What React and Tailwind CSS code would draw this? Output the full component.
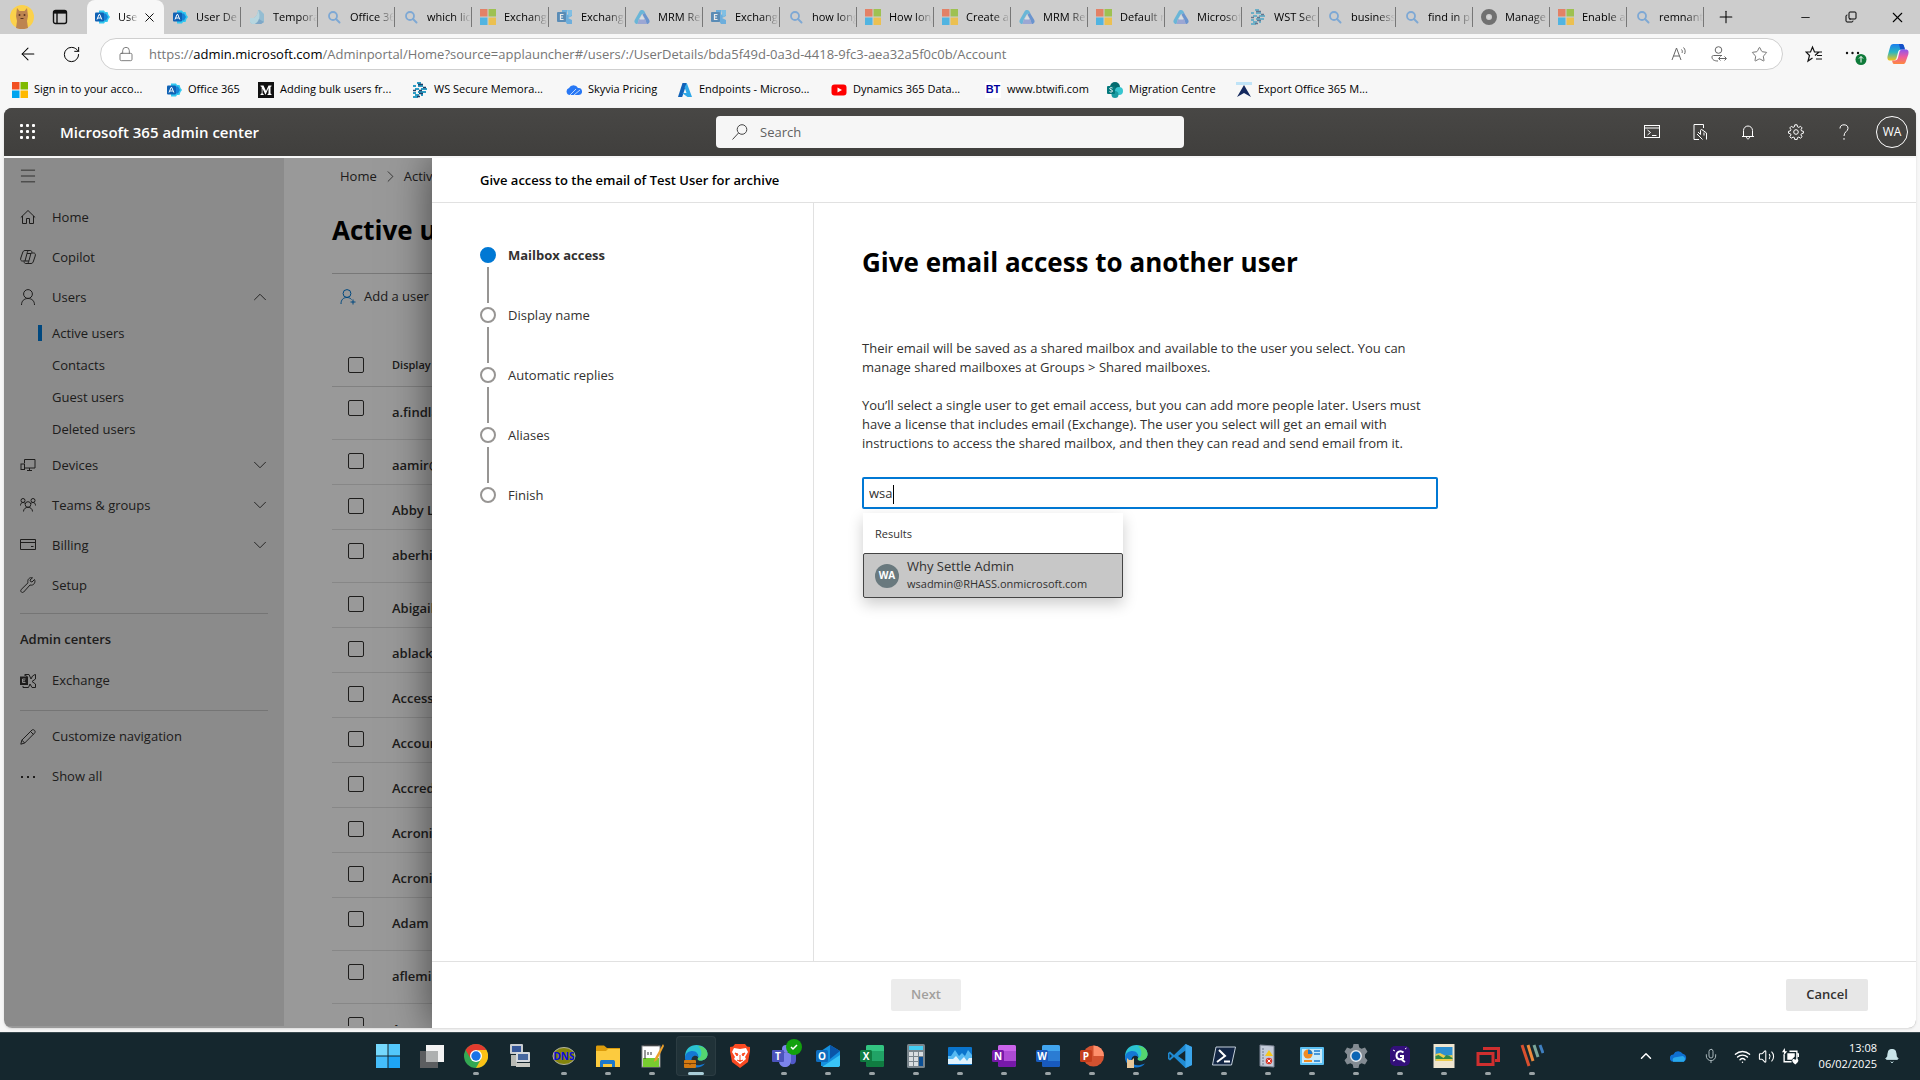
import {
  ArrowLeft,
  Bell,
  ChevronDown,
  ChevronRight,
  ChevronUp,
  Copy,
  Lock,
  Menu,
  Mic,
  Minus,
  Plus,
  RotateCw,
  Star,
  Volume2,
  Wifi,
  X,
} from 'lucide-react';

/* ---------- Favicons ---------- */

function Svg({ size = 16, box = 16, children, className = '' }) {
  return (
    <svg width={size} height={size} viewBox={`0 0 ${box} ${box}`} fill="none" className={`shrink-0 ${className}`} aria-hidden="true">
      {children}
    </svg>
  );
}

const favicons = {
  admin: (
    <Svg>
      <path d="M5 1.500h5l1 1.500h2.500l1 3L16 8l-1.500 2-1 3H11l-1 1.500H5z" fill="#32c8f0" />
      <path d="M9 4.500h3L14 8l-2 3.500H9z" fill="#1683d8" />
      <rect x="1" y="3.500" width="9" height="9" rx="1" fill="#0f62b5" />
      <path d="M3 10.500 5 5.500h.8l2 5M3.800 9h3" stroke="#fff" />
    </Svg>
  ),
  cube: (
    <Svg>
      <path d="M9 1h2l4 4v8l-3 2H3L1 13V9h3c2 0 5-3 5-8z" fill="#6fb4d6" />
      <path d="M9 1c0 5-3 8-5 8H1v4l2 2h3c4-2 6-8 3-14z" fill="#a9dcec" />
      <path d="M6 15c2-1 3.500-3 4-5l5 3-3 2z" fill="#4b8fc4" />
    </Svg>
  ),
  search: (
    <Svg>
      <circle cx="7" cy="7" r="4" stroke="#4a90d9" strokeWidth="1.800" />
      <path d="m10 10 3.500 3.500" stroke="#4a90d9" strokeWidth="2" strokeLinecap="round" />
    </Svg>
  ),
  ms: (
    <Svg>
      <path fill="#f25022" d="M0 0h7.500v7.500H0z" />
      <path fill="#7fba00" d="M8.500 0H16v7.500H8.500z" />
      <path fill="#00a4ef" d="M0 8.500h7.500V16H0z" />
      <path fill="#ffb900" d="M8.500 8.500H16V16H8.500z" />
    </Svg>
  ),
  exchange: (
    <Svg>
      <path d="M5 1h5v5l5-4v5l-4 2 4 2v4h-5l-2-3H5z" fill="#2f9be6" />
      <path d="M10 1h5v5l-3 2z" fill="#50b7f2" />
      <rect y="3" width="9" height="10" rx="1" fill="#0f62a8" />
      <path d="M6.500 5.500h-3v5h3M3.500 8h2.500" stroke="#fff" strokeWidth="1.200" />
    </Svg>
  ),
  tri: (
    <Svg>
      <path d="M8 1c2 0 2.500 1.500 3.500 3.500L8 5 5 10 3.500 15C1 15-.5 13 1 10.500L5.500 2.500C6.200 1.300 7 1 8 1z" fill="#2aa7df" />
      <path d="M11 4l4 6.500c1.500 2.500 0 4.500-2.500 4.500L11 10 8.500 5.500z" fill="#2a6fd0" />
      <path d="M5 10h6l2 5H3.500z" fill="#7a8ed8" />
      <path d="m8 6 2.500 4.500h-5z" fill="#dfe8f3" />
    </Svg>
  ),
  ws: (
    <Svg>
      <path d="M5 1h4M1 4h3M6 4h5M3 7h4M9 7h6M6 10h8M1 11h3M3 13h4M9 13h2M1 15h5" stroke="#2d9cc4" strokeWidth="1.800" />
      <path d="M6 2.500h5M11 5.500h3M1 8.500h3M7 8.500h3M7 11.500h4M5 14.500h3" stroke="#1f3f66" strokeWidth="1.500" />
    </Svg>
  ),
  gear: (
    <Svg>
      <circle cx="8" cy="8" r="5.500" stroke="#333" strokeWidth="5" />
      <circle cx="8" cy="8" r="1.500" fill="#ddd" />
    </Svg>
  ),
  medium: (
    <Svg>
      <rect width="16" height="16" fill="#111" />
      <path d="M2.500 3.500h3L8 9l2.500-5.500h3v.8l-1 .7v6.500l1 .7v.8H9.500v-.8l1-.7V6L7.700 12.500h-.4L4.500 6.500v4.800l1.200 1v.7H2.500v-.7l1.200-1V5l-1.200-.8z" fill="#fff" />
    </Svg>
  ),
  cloud: (
    <Svg>
      <path d="M4 13a3.600 3.600 0 0 1-1-7 5 5 0 0 1 9 0 3.500 3.500 0 0 1 1 7z" fill="#2878f5" />
      <path d="m4 13 6-6M8 13l6-5" stroke="#bcd6ff" />
    </Svg>
  ),
  azure: (
    <Svg>
      <path d="M5.500 1h4.300L5.200 15H1z" fill="#1062b8" />
      <path d="M9.800 1 15 15h-4.500L5 11h4.500L7.600 5.500z" fill="#2fa8e8" />
    </Svg>
  ),
  youtube: (
    <Svg>
      <rect x=".5" y="2.500" width="15" height="11" rx="3" fill="#f00" />
      <path d="m6.500 5.500 4.500 2.500-4.500 2.500z" fill="#fff" />
    </Svg>
  ),
  bt: (
    <span className="flex size-4 shrink-0 items-center justify-center bg-white font-['Liberation_Sans',sans-serif] text-[11px] font-bold text-[#00009c]">
      BT
    </span>
  ),
  sharepoint: (
    <Svg>
      <circle cx="8" cy="5" r="5" fill="#036c70" />
      <circle cx="12" cy="9" r="4" fill="#37c6d0" />
      <circle cx="8" cy="12.500" r="3.500" fill="#1a9ba1" />
      <rect y="4" width="8" height="8" rx="1" fill="#03787c" />
      <path d="M5.500 6c-1-.6-3-.4-2.800.8.200 1.200 2.800.8 2.800 2.200 0 1.200-2 1.300-3 .6" stroke="#fff" />
    </Svg>
  ),
  export: (
    <Svg>
      <path d="M0 0h16v3H0z" fill="#bfe3f7" />
      <path d="m8 3 7 12-7-4-7 4z" fill="#14295e" />
    </Svg>
  ),
};

const tabs = [
  ['User De', 'admin'],
  ['Temporary', 'cube'],
  ['Office 365', 'search'],
  ['which licen', 'search'],
  ['Exchange', 'ms'],
  ['Exchange', 'exchange'],
  ['MRM Rete', 'tri'],
  ['Exchange', 'exchange'],
  ['how long', 'search'],
  ['How long', 'ms'],
  ['Create an', 'ms'],
  ['MRM Rete', 'tri'],
  ['Default r', 'ms'],
  ['Microsoft', 'tri'],
  ['WST Secu', 'ws'],
  ['business', 'search'],
  ['find in pl', 'search'],
  ['Manage', 'gear'],
  ['Enable ar', 'ms'],
  ['remnant', 'search'],
];

const bookmarks = [
  ['Sign in to your acco...', 'ms', 'w-[154px]'],
  ['Office 365', 'admin', 'w-[92px]'],
  ['Adding bulk users fr...', 'medium', 'w-[154px]'],
  ['WS Secure Memora...', 'ws', 'w-[154px]'],
  ['Skyvia Pricing', 'cloud', 'w-[111px]'],
  ['Endpoints - Microso...', 'azure', 'w-[154px]'],
  ['Dynamics 365 Data...', 'youtube', 'w-[154px]'],
  ['www.btwifi.com', 'bt', 'w-[122px]'],
  ['Migration Centre', 'sharepoint', 'w-[129px]'],
  ['Export Office 365 M...', 'export', 'w-[154px]'],
];

/* ---------- Browser chrome ---------- */

function TabStrip() {
  return (
    <div className="flex h-[34px] shrink-0 items-center bg-[#cdcdcd] text-[11px] text-black">
      <div className="flex w-[87px] shrink-0 items-center gap-[18px] pl-[10px]">
        <Svg size={24} box={24}>
          <circle cx="12" cy="12" r="12" fill="#fbd14b" />
          <path d="M7 3l2.500 3h5L17 3l1 8-1 5 1 7c-3 1.500-9 1.500-12 0l1-7-1-5z" fill="#bd8450" />
          <circle cx="9.500" cy="10" r="1" fill="#5a3420" />
          <circle cx="14.500" cy="10" r="1" fill="#5a3420" />
          <path d="M10.500 13.500h3" stroke="#5a3420" />
        </Svg>
        <button type="button" aria-label="Tab actions menu">
          <Svg>
            <rect x="1.500" y="1.500" width="13" height="13" rx="2" stroke="#111" strokeWidth="1.400" />
            <path d="M1.500 3.500h13M5 4v10" stroke="#111" strokeWidth="1.400" />
            <path d="M2 2h12v2.500H2z" fill="#111" />
          </Svg>
        </button>
      </div>
      <div className="flex h-full w-[77px] shrink-0 items-center rounded-t-lg bg-[#f7f7f7] pl-[7px]">
        {favicons.admin}
        <span className="ml-2 w-5 overflow-hidden whitespace-nowrap [mask-image:linear-gradient(to_right,black_50%,transparent)]">User</span>
        <button type="button" aria-label="Close tab" className="ml-1">
          <X size={15} strokeWidth={1.5} />
        </button>
      </div>
      {tabs.map(([title, icon], i) => (
        <button
          type="button"
          key={i}
          className="flex h-5 w-[77px] shrink items-center gap-2 overflow-hidden border-r border-[#777] pl-2"
        >
          <span className={i > 0 ? 'opacity-60' : ''}>{favicons[icon]}</span>
          <span className="flex-1 overflow-hidden text-left whitespace-nowrap [mask-image:linear-gradient(to_right,black_60%,transparent)]">
            {title}
          </span>
        </button>
      ))}
      <button type="button" aria-label="New tab" className="ml-3">
        <Plus size={20} strokeWidth={1.25} />
      </button>
      <div className="ml-auto flex items-center">
        <button type="button" aria-label="Minimize" className="flex w-[46px] justify-center">
          <Minus size={13} strokeWidth={1.5} />
        </button>
        <button type="button" aria-label="Restore" className="flex w-[46px] justify-center">
          <Copy size={12} strokeWidth={2} className="-scale-x-100 rotate-180" />
        </button>
        <button type="button" aria-label="Close" className="flex w-[46px] justify-center">
          <X size={17} strokeWidth={1.5} />
        </button>
      </div>
    </div>
  );
}

function AddressBar() {
  return (
    <div className="flex h-10 shrink-0 items-center bg-[#f7f7f7] pl-[18px] text-black">
      <button type="button" aria-label="Back">
        <ArrowLeft size={20} strokeWidth={1.25} />
      </button>
      <button type="button" aria-label="Refresh" className="ml-6">
        <RotateCw size={19} strokeWidth={1.25} />
      </button>
      <div className="ml-[19px] flex h-8 flex-1 items-center rounded-full border border-[#cfcfcf] bg-white pr-[14px] pl-[17px] text-[#666]">
        <Lock size={16} strokeWidth={1.25} />
        <p className="ml-[15px] flex-1 pt-px text-[13px] whitespace-nowrap text-[#767676]">
          https://<span className="text-black">admin.microsoft.com</span>
          /Adminportal/Home?source=applauncher#/users/:/UserDetails/bda5f49d-0a3d-4418-9fc3-aea32a5f0c0b/Account
        </p>
        <div className="flex items-center gap-6">
          <button type="button" aria-label="Read aloud">
            <Svg>
              <path d="m1 14 4.500-12L10 14M2.500 10h6M10.500 3.500c1 1 1 2.500.5 3.500M12.500 1.500c2 2 2 4.500 1 6.500" stroke="#666" />
            </Svg>
          </button>
          <button type="button" aria-label="Profile sign in">
            <Svg>
              <circle cx="7.500" cy="4" r="3.300" stroke="#666" />
              <path d="M11 9.500H2.500c-1 0-1.500.6-1.500 1.500 0 2.500 2 4 6 4M8 12.500h7M9.500 10.500l-2 2 2 2M13.500 10.500l2 2-2 2" stroke="#666" />
            </Svg>
          </button>
          <button type="button" aria-label="Favorite">
            <Star size={17} strokeWidth={1.25} />
          </button>
        </div>
      </div>
      <div className="flex w-[137px] shrink-0 items-center justify-end gap-5 pr-[11px]">
        <button type="button" aria-label="Favorites">
          <Svg size={18} box={18}>
            <path d="M10 10.500 14 7H9.500L7.500 2 5.500 7H1l3.500 3.500L3 16l4.500-3M11.500 7H17M12 10.500h5M11 14h6" stroke="#111" strokeWidth="1.200" />
          </Svg>
        </button>
        <button type="button" aria-label="Settings and more">
          <Svg size={24} box={24}>
            <circle cx="4" cy="11" r="1.200" fill="#111" />
            <circle cx="9.500" cy="11" r="1.200" fill="#111" />
            <circle cx="15" cy="11" r="1.200" fill="#111" />
            <circle cx="18" cy="17.500" r="5.500" fill="#0f7b3a" />
            <path d="M18 20.500v-6M16 16.500l2-2 2 2" stroke="#fff" />
          </Svg>
        </button>
        <button type="button" aria-label="Copilot">
          <CopilotLogo />
        </button>
      </div>
    </div>
  );
}

function CopilotLogo() {
  return (
    <Svg size={22} box={24}>
      <defs>
        <linearGradient id="cpa" x1="0" y1="0" x2="0" y2="1">
          <stop offset="0" stopColor="#1b7ef0" />
          <stop offset=".5" stopColor="#29b6c0" />
          <stop offset="1" stopColor="#f5c518" />
        </linearGradient>
        <linearGradient id="cpb" x1="0" y1="0" x2="0" y2="1">
          <stop offset="0" stopColor="#8b55ee" />
          <stop offset=".5" stopColor="#ee5aa0" />
          <stop offset="1" stopColor="#ff8a3c" />
        </linearGradient>
      </defs>
      <path d="M7 1h9c2 0 2.500 1.500 3 4l.5 2h-4c-2 0-3 1-3.500 3l-1.500 6c-.5 2-1.500 3-3.500 3H3.500C.5 19 0 16.500.8 13.500l2.500-9C4 2.200 5 1 7 1z" fill="url(#cpa)" />
      <path d="M13 1h3c2 0 2.500 1.500 3 4l.5 2h-5z" fill="#1450c8" />
      <path d="M17 23H8.500c-2 0-2.500-1.500-3-4h3c2 0 3-1 3.500-3l1.500-6c.5-2 1.500-3 3.500-3h3.500c3 0 3.500 2.500 2.700 5.500l-2.500 7C20 21.800 19 23 17 23z" fill="url(#cpb)" />
    </Svg>
  );
}

function Bookmarks() {
  return (
    <nav aria-label="Favorites bar" className="flex h-[34px] shrink-0 items-center bg-[#f7f7f7] pb-[3px] pl-3 text-[11px] text-black">
      {bookmarks.map(([label, icon, width]) => (
        <a key={label} href="#" className={`flex shrink-0 items-center gap-[6px] whitespace-nowrap ${width}`}>
          {favicons[icon]}
          {label}
        </a>
      ))}
    </nav>
  );
}

/* ---------- Admin center ---------- */

const headerIcons = {
  'Cloud Shell': (
    <>
      <rect x=".5" y="1.500" width="15" height="12" />
      <path d="M.5 4h15M3.500 6l3 2.500-3 2.500M8 11.500h4.500" />
    </>
  ),
  Mobile: (
    <>
      <path d="M7 15.500H2V.5h9.500V4" />
      <path d="m6 8 2.500 2.500V6.500c0-1.300 2-1.300 2 0M5 10l5.500 5.500M10.500 6l4 3v6.500M12 11.500V8.500" />
    </>
  ),
  Notifications: (
    <>
      <path d="M3.500 12.500V6.500a4.500 4.500 0 0 1 9 0v6M2 12.500h12M6.500 13c0 2.500 3 2.500 3 0" />
    </>
  ),
  Settings: (
    <>
      <circle cx="8" cy="8" r="2.300" />
      <path d="m6.800.8-.4 2-1.300.6-1.800-1.100-1.500 1.600 1.100 1.700-.5 1.300-1.900.4v1.900l1.900.5.6 1.200-1.200 1.800 1.500 1.500 1.800-1.100 1.300.5.4 2h2.300l.4-2 1.300-.5 1.700 1.100 1.600-1.500-1.200-1.800.6-1.200 1.900-.5V7.300l-1.900-.4-.5-1.300 1.100-1.700-1.600-1.600-1.700 1.100-1.300-.6-.4-2z" />
    </>
  ),
  Help: <path d="M4 4.500C4 2 5.500.8 8 .8s4 1.200 4 3.500C12 7.500 8 7.500 8 12M8 14v1.800" />,
};

function AppHeader() {
  return (
    <header className="flex h-12 shrink-0 items-center justify-between bg-[#474644] bg-linear-to-b from-[#484745] to-[#403f3d] text-white">
      <div className="flex flex-1 items-center gap-6 pl-4">
        <button type="button" aria-label="App launcher">
          <Svg className="fill-white">
            {[1, 7, 13].map((y) => [1, 7, 13].map((x) => <rect key={`${x}-${y}`} x={x - 1} y={y - 1} width="3" height="3" rx="1" />))}
          </Svg>
        </button>
        <span className="text-[15px] font-semibold">Microsoft 365 admin center</span>
      </div>
      <label className="flex h-8 w-[468px] items-center gap-3 rounded bg-[#f6f6f6] px-4 text-[#444]">
        <Svg>
          <circle cx="10" cy="5.500" r="4.800" stroke="#444" />
          <path d="M6.500 9 .5 15.500" stroke="#444" />
        </Svg>
        <input type="search" aria-label="Search" placeholder="Search" className="flex-1 bg-transparent pt-0.5 text-[13px] outline-none placeholder:text-[#616161]" />
      </label>
      <div className="flex flex-1 items-center justify-end pl-9">
        {Object.entries(headerIcons).map(([label, icon]) => (
          <button type="button" key={label} aria-label={label} className="flex w-12 justify-center">
            <Svg className="stroke-white">{icon}</Svg>
          </button>
        ))}
        <button type="button" aria-label="Account manager" className="mx-2 flex size-8 items-center justify-center rounded-full border border-white text-[12px]">
          WA
        </button>
      </div>
    </header>
  );
}

const navIcons = {
  home: <path d="M.8 8.500 8 1.500l7.200 7M2.500 7v7.500h4v-5h3v5h4V7" />,
  copilot: (
    <path d="M5 1.500h5.500c1 0 1.200.8 1.500 2M5 1.500c-1.500 0-2 1-2.500 2.500L.8 9c-.6 2 .2 3 1.500 3H5l2-7.500c.4-1.800.8-3 2-3M11 14.500H5.500c-1 0-1.200-.8-1.500-2M11 14.500c1.500 0 2-1 2.500-2.500l1.700-5c.6-2-.2-3-1.500-3H11L9 11.500c-.4 1.800-.8 3-2 3M7 4.500h4M5 12h4" />
  ),
  users: (
    <>
      <circle cx="8" cy="5" r="4.400" />
      <path d="M1.500 16c0-4 2.500-6.500 6.500-6.500s6.500 2.500 6.500 6.500" />
    </>
  ),
  devices: (
    <>
      <path d="M4.500 6V2.500h10.500v8.500H5M7 13.500h5M9.500 11v2.500" />
      <rect x="1" y="7" width="3.500" height="5.500" />
    </>
  ),
  teams: (
    <>
      <circle cx="8" cy="7.500" r="2.800" />
      <circle cx="3" cy="3.500" r="2" />
      <circle cx="13" cy="3.500" r="2" />
      <path d="M3.500 14.500c0-2.500 2-4.200 4.500-4.200s4.500 1.700 4.500 4.200M.5 8.500c0-2 1-3 2.500-3s2 .7 2.500 1.500M15.500 8.500c0-2-1-3-2.500-3s-2 .7-2.500 1.500" />
    </>
  ),
  billing: <path d="M.5 2.500h15v10H.5zM.5 5.500h15M11 9.500h2.500" />,
  setup: <path d="M14.500 2.500 12 5l-1.500-.5L10 3l2.500-2.200C9.500 0 7 2.500 8 5.800L1.200 12.500c-1.500 1.800 1 4 2.500 2.500L10 8c3.500 1 6-2.500 4.500-5.500z" />,
  exchange: (
    <>
      <path d="M5 3V1.500h4L11 6l1.500-3 2.500-1.500h.5V6L12 8.500l3.500 2.500v3.500H12L10 11l-1.500 3.500H3V13M5 1.500 8 5" />
      <rect x=".5" y="4" width="7" height="7.500" fill="#323130" />
      <path d="M5.500 6h-3v3.500h3M2.500 7.800h2.500" stroke="#e8e8e8" />
    </>
  ),
  edit: <path d="m.8 15.200 1-4L12 1c1.500-1.200 4 1 2.800 2.800L4.700 14zM10.500 2.500l3 3M1.800 11.200l3 2.800" />,
  more: <path d="M1 8h2M7 8h2M13 8h2" strokeWidth="2" />,
};

function NavItem({ icon, label, expand }) {
  return (
    <li>
      <button type="button" className="flex h-10 w-full items-center pr-[13px] pl-4 text-left">
        <Svg className="stroke-[#323130]">{navIcons[icon]}</Svg>
        <span className="ml-4 flex-1 pt-px">{label}</span>
        {expand === 'up' && <ChevronUp size={22} strokeWidth={1} />}
        {expand === 'down' && <ChevronDown size={22} strokeWidth={1} />}
      </button>
    </li>
  );
}

function Sidebar() {
  return (
    <nav aria-label="Admin center" className="w-[280px] shrink-0 bg-[#e8e8e8] text-[13px] text-[#323130]">
      <button type="button" aria-label="Collapse navigation" className="flex h-[39px] items-center pb-[3px] pl-[14px]">
        <Menu size={20} strokeWidth={1} />
      </button>
      <ul>
        <NavItem icon="home" label="Home" />
        <NavItem icon="copilot" label="Copilot" />
        <NavItem icon="users" label="Users" expand="up" />
        <li>
          <ul>
            {['Active users', 'Contacts', 'Guest users', 'Deleted users'].map((label, i) => (
              <li key={label} className="flex h-8 items-center pl-[34px]">
                <span className={`h-4 w-1 ${i === 0 ? 'bg-[#0078d4]' : ''}`} />
                <a href="#" className="ml-[10px] pt-px">{label}</a>
              </li>
            ))}
          </ul>
        </li>
        <NavItem icon="devices" label="Devices" expand="down" />
        <NavItem icon="teams" label="Teams & groups" expand="down" />
        <NavItem icon="billing" label="Billing" expand="down" />
        <NavItem icon="setup" label="Setup" />
      </ul>
      <div className="mx-4 mt-2 border-t border-[#c4c4c4] pt-4 pb-[11px]">
        <h2 className="font-semibold">Admin centers</h2>
      </div>
      <ul>
        <NavItem icon="exchange" label="Exchange" />
      </ul>
      <ul className="mt-[9px]">
        <li className="mx-4 mb-[6px] border-t border-[#c4c4c4]" />
        <NavItem icon="edit" label="Customize navigation" />
        <NavItem icon="more" label="Show all" />
      </ul>
    </nav>
  );
}

const users = [
  ['a.findlay', true],
  ['aamir@', false],
  ['Abby Lane', false],
  ['aberhill', true],
  ['Abigail', false],
  ['ablack', false],
  ['Access', false],
  ['Accounts', false],
  ['Accreditation', false],
  ['Acronis', false],
  ['Acronis', false],
  ['Adam', true],
  ['afleming', true],
  ['Agnes', true],
];

function Check({ label }) {
  return (
    <input type="checkbox" aria-label={label} className="block size-4 appearance-none rounded-xs border border-[#323130]" />
  );
}

function UsersPage() {
  return (
    <main className="flex-1 overflow-hidden bg-white pl-12 text-[13px] text-[#323130]">
      <div className="flex h-[37px] items-center gap-1 pl-2">
        <a href="#">Home</a>
        <ChevronRight size={19} strokeWidth={1} />
        <span>Active users</span>
      </div>
      <h1 className="mt-[19px] text-[26px] leading-8 font-bold text-black">Active users</h1>
      <div className="mt-[27px] flex h-[46px] items-center gap-2 border-t border-[#c8c8c8] pl-2">
        <Svg className="stroke-[#0078d4]">
          <circle cx="7" cy="4.500" r="3.900" />
          <path d="M1 15c0-4 2-6.500 6-6.500 2 0 3.500.8 4.500 2M13 10.500v5M10.500 13h5" />
        </Svg>
        <button type="button">Add a user</button>
      </div>
      <table className="mt-[26px] w-full table-fixed border-collapse text-left font-semibold">
        <thead>
          <tr className="h-[41px] border-b border-[#d8d8d8] text-[11px]">
            <th className="w-[60px] pl-4"><Check label="Select all" /></th>
            <th className="font-semibold">Display name</th>
          </tr>
        </thead>
        <tbody>
          {users.map(([name, tall], i) => (
            <tr key={i} className={`border-b border-[#e1e1e1] align-top ${tall ? 'h-[53px]' : 'h-[45px]'}`}>
              <td className="pt-[13px] pl-4"><Check label={name} /></td>
              <td className="pt-4">{name}</td>
            </tr>
          ))}
        </tbody>
      </table>
    </main>
  );
}

const steps = ['Mailbox access', 'Display name', 'Automatic replies', 'Aliases', 'Finish'];

function AccessPanel() {
  return (
    <section
      role="dialog"
      aria-label="Give access to the email of Test User for archive"
      className="absolute inset-y-0 right-0 left-[428px] flex flex-col bg-white text-[13px] text-[#323130] shadow-[0_0_40px_rgba(0,0,0,0.55)]"
    >
      <div className="flex h-[45px] shrink-0 items-center border-b border-[#e1e1e1] px-12 pt-px font-semibold text-black">
        Give access to the email of Test User for archive
      </div>
      <div className="flex min-h-0 flex-1">
        <ol className="w-[382px] shrink-0 border-r border-[#e1e1e1] px-12 pt-11">
          {steps.map((step, i) => (
            <li key={step} className="flex gap-3">
              <div className="flex w-4 flex-col items-center gap-1">
                <span className={`size-4 rounded-full border-2 ${i === 0 ? 'border-[#0078d4] bg-[#0078d4]' : 'border-[#979593]'}`} />
                {i < steps.length - 1 && <span className="mb-1 h-9 w-[2px] bg-[#979593]" />}
              </div>
              <span className={`leading-4 ${i === 0 ? 'font-bold' : ''}`}>{step}</span>
            </li>
          ))}
        </ol>
        <div className="flex-1 px-12 pt-[43px]">
          <h2 className="text-[26px] leading-8 font-bold text-black">Give email access to another user</h2>
          <div className="mt-[61px] max-w-[576px] leading-[19px]">
            <p>
              Their email will be saved as a shared mailbox and available to the user you select. You can
              manage shared mailboxes at Groups &gt; Shared mailboxes.
            </p>
            <p className="mt-[19px]">
              You’ll select a single user to get email access, but you can add more people later. Users must
              have a license that includes email (Exchange). The user you select will get an email with
              instructions to access the shared mailbox, and then they can read and send email from it.
            </p>
          </div>
          <div className="relative mt-6 max-w-[576px]">
            <label className="flex h-8 items-center rounded-xs border-2 border-[#0078d4] px-[5px] pt-0.5">
              <input
                type="text"
                aria-label="Select a user"
                defaultValue="wsa"
                className="field-sizing-content caret-transparent outline-none"
              />
              <span className="h-[19px] w-px bg-black" />
            </label>
            <div className="absolute top-full left-px mt-1 w-[260px] bg-white shadow-[0_6px_14px_rgba(0,0,0,0.2)]">
              <p className="flex h-10 items-center px-3 pt-0.5 text-[11px]">Results</p>
              <button type="button" className="flex h-[45px] w-full items-center gap-2 rounded-xs border border-[#444] bg-[#c7c7c7] px-[11px] text-left">
                <span className="flex size-6 items-center justify-center rounded-full bg-[#69797e] text-[10px] font-bold text-white">WA</span>
                <span className="flex flex-col pb-0.5">
                  <span className="leading-[19px]">Why Settle Admin</span>
                  <span className="text-[11px] leading-4">wsadmin@RHASS.onmicrosoft.com</span>
                </span>
              </button>
            </div>
          </div>
        </div>
      </div>
      <div className="flex h-[67px] shrink-0 items-center justify-between border-t border-[#e1e1e1] pr-12 pb-px pl-[459px] font-semibold">
        <button type="button" disabled className="h-8 w-[70px] rounded-xs bg-[#ececec] text-[#a19f9d]">Next</button>
        <button type="button" className="h-8 w-[82px] rounded-xs bg-[#e7e7e7]">Cancel</button>
      </div>
    </section>
  );
}

/* ---------- Taskbar ---------- */

function OfficeIcon({ letter, dark, mid, light, round }) {
  return (
    <Svg size={24} box={24}>
      {round ? (
        <>
          <circle cx="13.500" cy="12" r="10.500" fill={mid} />
          <path d="M13.500 1.500A10.500 10.500 0 0 1 24 12H13.500z" fill={light} />
        </>
      ) : (
        <>
          <rect x="6" y="1" width="18" height="22" rx="2" fill={mid} />
          <path d="M8 1h14a2 2 0 0 1 2 2v4H6V3a2 2 0 0 1 2-2z" fill={light} />
          <path d="M6 17h18v4a2 2 0 0 1-2 2H8a2 2 0 0 1-2-2z" fill={dark} />
        </>
      )}
      <rect y="6" width="12" height="12" rx="1.500" fill={dark} />
      <text x="6" y="15.500" textAnchor="middle" fontSize="10" fontWeight="700" fill="#fff">{letter}</text>
    </Svg>
  );
}

const edgeShape = (
  <>
    <path d="M1 13C1 5 6 1 12.500 1 19 1 23.500 5 23.500 10c0 4-3 6.500-7 6.500-3 0-3-1.500-2.500-2.500 1-2-.5-5-4-5-4 0-7 3-7 8-1-1-2-2.500-2-4z" fill="#2bc3d2" />
    <path d="M14 2c6 0 9.500 4 9.500 8 0 4-3 6.500-7 6.500-3 0-3-1.500-2.500-2.500 4 0 5-8 0-12z" fill="#54d66f" />
    <path d="M1 13c.5-4 4-6 7.500-6 4 0 6 3 5.500 6-3-3-8 0-6 5 1.500 3.500 6 4.500 13 1.500-2 2.500-5 4-9 4C5.500 23.500 1 19 1 13z" fill="#1478d4" />
  </>
);

const apps = [
  { name: 'Start', icon: (
    <Svg size={24} box={24}>
      <path d="M0 0h11.500v11.500H0z" fill="#75d8fc" />
      <path d="M12.500 0H24v11.500H12.500z" fill="#53c7fb" />
      <path d="M0 12.500h11.500V24H0z" fill="#45bdfa" />
      <path d="M12.500 12.500H24V24H12.500z" fill="#1ea5f5" />
    </Svg>
  ) },
  { name: 'Task view', icon: (
    <Svg size={24} box={24}>
      <path d="M6 1h18v17H6z" fill="#f3f3f3" />
      <path d="M0 7h18v17H0z" fill="#5c5e60" />
      <path d="M6 7h12v11H6z" fill="#aeb0b0" />
    </Svg>
  ) },
  { name: 'Chrome', dot: true, icon: (
    <Svg size={24} box={24}>
      <circle cx="12" cy="12" r="12" fill="#34a853" />
      <path d="M1.600 6A12 12 0 0 1 22.400 6L12 7 7 15z" fill="#e33b2e" />
      <path d="M22.400 6A12 12 0 0 1 12 24l5-9-3-9z" fill="#fbc116" />
      <circle cx="12" cy="12" r="6" fill="#fff" />
      <circle cx="12" cy="12" r="4.700" fill="#1a73e8" />
    </Svg>
  ) },
  { name: 'Remote computers', icon: (
    <Svg size={24} box={24}>
      <rect x="2" y="0" width="13" height="10" rx="1" fill="#c8ccd0" />
      <rect x="4" y="2" width="9" height="6" fill="#36589a" />
      <path d="M3 11h6v8h3v3H3z" fill="#b8bab4" />
      <rect x="8" y="8" width="14" height="10" rx="1" fill="#d5d8dc" />
      <rect x="10" y="10" width="10" height="6" fill="#47689f" />
      <path d="M8 19h14v4H8z" fill="#c9c9c2" />
    </Svg>
  ) },
  { name: 'DNS', dot: true, icon: (
    <Svg size={24} box={24}>
      <ellipse cx="12" cy="12" rx="11" ry="8.500" fill="#84840c" stroke="#b5b5a0" />
      <text x="12" y="16" textAnchor="middle" fontSize="10" fontWeight="700" fill="#0a0ae0">DNS</text>
    </Svg>
  ) },
  { name: 'File Explorer', dot: true, icon: (
    <Svg size={24} box={24}>
      <path d="M0 3c0-1 .5-1.500 1.500-1.500H8L11 4h13v6H0z" fill="#dc9c0c" />
      <path d="M0 7h10l2-2h12v18H0z" fill="#fccb3f" />
      <path d="M4 23v-5c0-1.500 1-2 2-2h11c1 0 2 .5 2 2v5h-3v-3H7v3z" fill="#1c78cc" />
    </Svg>
  ) },
  { name: 'Notepad++', dot: true, icon: (
    <Svg size={24} box={24}>
      <rect x="2" y="2" width="18" height="21" fill="#fff" stroke="#8a8a8a" />
      <path d="M3 14h16v9H3z" fill="#78cc30" />
      <path d="M5 6v9M8 8v3M11 8v3M4 1h14" stroke="#333" />
      <path d="m23 0-8 14-1 4 3-2 7-14z" fill="#eda02a" />
    </Svg>
  ) },
  { name: 'Microsoft Edge work', active: true, icon: (
    <Svg size={24} box={24}>
      {edgeShape}
      <rect y="16" width="12" height="8" rx="1" fill="#d37a12" />
      <path d="M0 19.500h12M6 19v2" stroke="#7a4108" />
    </Svg>
  ) },
  { name: 'Brave', icon: (
    <Svg size={24} box={24}>
      <path d="m7 0h10l2 2.500 3 .5 0 4-2 11-8 6-8-6L2 7l0-4 3-.5z" fill="#fb4a22" />
      <path d="M6 4l6 1 6-1 2 4-3 5 1 2-6 5-6-5 1-2-3-5z" fill="#fff" />
      <path d="m7 9 3 1-1 2zM17 9l-3 1 1 2zM12 11v5M9 16l3 1.500 3-1.500" stroke="#fb4a22" fill="#fb4a22" />
    </Svg>
  ) },
  { name: 'Teams', dot: true, badge: true, icon: (
    <Svg size={24} box={24}>
      <circle cx="14" cy="5" r="4" fill="#7b83eb" />
      <circle cx="21" cy="7" r="2.500" fill="#5059c9" />
      <path d="M7 9h12v8c0 8-12 8-12 0z" fill="#7b83eb" />
      <path d="M19 10h5v6c0 4-3 5-5 4z" fill="#5059c9" />
      <rect y="6" width="12" height="12" rx="1" fill="#4b53bc" />
      <text x="6" y="15.500" textAnchor="middle" fontSize="10" fontWeight="700" fill="#fff">T</text>
    </Svg>
  ) },
  { name: 'Outlook', dot: true, icon: (
    <Svg size={24} box={24}>
      <path d="M5 7 14 1l10 6v15H5z" fill="#1490df" />
      <path d="m14 1 10 6-10 8z" fill="#0a55a8" />
      <path d="m6 23 18-12v10c0 1.500-1 2-2 2z" fill="#39c3f5" />
      <rect y="6" width="12" height="12" rx="1.500" fill="#0f6cbd" />
      <text x="6" y="15.500" textAnchor="middle" fontSize="10" fontWeight="700" fill="#fff">O</text>
    </Svg>
  ) },
  { name: 'Excel', dot: true, icon: <OfficeIcon letter="X" dark="#107c41" mid="#21a366" light="#33c481" /> },
  { name: 'Calculator', dot: true, icon: (
    <Svg size={24} box={24}>
      <rect x="3" y="0" width="18" height="24" rx="1.500" fill="#79858c" />
      <rect x="5" y="2" width="14" height="4" fill="#44cdf2" />
      <path d="M5 8h4v4H5zM10 8h4v4h-4zM15 8h4v4h-4zM5 13h4v4H5zM10 13h4v4h-4zM5 18h4v4H5zM10 18h4v4h-4z" fill="#d9dee1" />
      <path d="M15 13h4v9h-4z" fill="#0c4f94" />
    </Svg>
  ) },
  { name: 'Performance', dot: true, icon: (
    <Svg size={24} box={24}>
      <rect y="3" width="24" height="18" rx="1" fill="#0a74cc" />
      <path d="M0 12h3l4-6 4 6 3-3 3 3 3-6 4 5v9H0z" fill="#56b9f2" />
      <path d="M0 15h5l3-3 4 5 4-4 3 4 2-3h3v6H0z" fill="#e0f2fd" />
    </Svg>
  ) },
  { name: 'OneNote', dot: true, icon: <OfficeIcon letter="N" dark="#7719aa" mid="#ae4bd5" light="#ca64ea" /> },
  { name: 'Word', dot: true, icon: <OfficeIcon letter="W" dark="#185abd" mid="#2b7cd3" light="#41a5ee" /> },
  { name: 'PowerPoint', dot: true, icon: <OfficeIcon letter="P" dark="#c43e1c" mid="#d35230" light="#ff8f6b" round /> },
  { name: 'Microsoft Edge', dot: true, icon: (
    <Svg size={24} box={24}>
      {edgeShape}
      <path d="m3 14 2 2h3l2-2v10H3z" fill="#e8c79a" />
    </Svg>
  ) },
  { name: 'VS Code', dot: true, icon: (
    <Svg size={24} box={24}>
      <path d="M17.500 0 24 3v18l-6.500 3L6 13l-4 3.500L0 15v-6l2-1.500L6 11z" fill="#1f8ad2" />
      <path d="M17.500 6.500v11L10 12zM1.500 9.500v5L4 12z" fill="#15272e" />
      <path d="m17.500 0 6.500 3v18l-6.500 3z" fill="#3ba6ec" />
    </Svg>
  ) },
  { name: 'PowerShell', dot: true, icon: (
    <Svg size={24} box={24}>
      <path d="M4 3h19.500l-4 18H.5z" fill="#122644" stroke="#c4d0dc" />
      <path d="m7 6 6 6-8 6M12 17.500h6" stroke="#fff" strokeWidth="2" />
    </Svg>
  ) },
  { name: 'Event viewer', dot: true, icon: (
    <Svg size={24} box={24}>
      <path d="m4 1 14 1v21L4 22z" fill="#c3cbd9" stroke="#7d8594" />
      <path d="M7 4v17" stroke="#6c7688" strokeDasharray="2 1" />
      <path d="m13 6 4 6H9z" fill="#f5c71a" />
      <circle cx="13" cy="17" r="3.300" fill="#dc3a2c" />
      <path d="m11.500 15.500 3 3M14.500 15.500l-3 3" stroke="#fff" />
    </Svg>
  ) },
  { name: 'Control panel', dot: true, icon: (
    <Svg size={24} box={24}>
      <rect y="3" width="24" height="18" rx="1" fill="#5cc0f3" />
      <rect x="2" y="5" width="20" height="14" fill="#c9ebfb" />
      <circle cx="8" cy="10" r="4.500" fill="#f08c24" />
      <path d="M8 10V5.500a4.500 4.500 0 0 1 4.500 4.500z" fill="#1c7bcd" />
      <path d="M14 7h6M14 10h6M14 17h6" stroke="#1c7bcd" strokeWidth="1.500" />
      <path d="M4 17h8" stroke="#f08c24" strokeWidth="2" />
    </Svg>
  ) },
  { name: 'Settings', dot: true, icon: (
    <Svg size={24} box={24}>
      <path d="m9.500 0h5l.8 3.500 2.200 1.200L21 3.500l2.500 4.300L21 10.500v3l2.500 2.700L21 20.500l-3.500-1.200-2.200 1.200-.8 3.500h-5l-.8-3.500-2.200-1.200L3 20.500.5 16.200 3 13.500v-3L.5 7.800 3 3.500l3.500 1.200 2.200-1.200z" fill="#838b92" />
      <circle cx="12" cy="12" r="5.200" fill="#0d66b5" stroke="#e6eaee" strokeWidth="1.500" />
    </Svg>
  ) },
  { name: 'Gather', dot: true, icon: (
    <Svg size={24} box={24}>
      <rect x="2" y="2" width="20" height="20" rx="5" fill="#33107a" />
      <path d="M15.500 8.500c-3-2.500-7-1-7 3s3.500 4.500 6.500 3V12H12M14 16l3 2" stroke="#fff" strokeWidth="2" />
      <path d="M5 6l2 1M17 5l1.500-1M5 17l2-1" stroke="#fff" />
    </Svg>
  ) },
  { name: 'Photo viewer', dot: true, icon: (
    <Svg size={24} box={24}>
      <rect x="1.500" y="0" width="21" height="24" fill="#efe6d0" />
      <rect x="3.500" y="3" width="17" height="14" fill="#2d8fd0" />
      <path d="M3.500 10 8 9l6 3 6.500-1v6h-17z" fill="#eccc4c" />
      <path d="m3.500 12 3-1 5 3 3-3 3 1 3 2v1h-17z" fill="#2f8a4a" />
    </Svg>
  ) },
  { name: 'Remote windows', dot: true, icon: (
    <Svg size={24} box={24}>
      <path d="M7 4.500h15.500v12H19" stroke="#cf2f2f" strokeWidth="3" />
      <rect x="2" y="9.500" width="15" height="11" stroke="#cf2f2f" strokeWidth="3" />
    </Svg>
  ) },
  { name: 'Stripes', dot: true, icon: (
    <Svg size={24} box={24}>
      <path d="m2 1 7 21" stroke="#d8502f" strokeWidth="3" />
      <path d="m8 1 5 16" stroke="#ee8a3c" strokeWidth="3" />
      <path d="m14 1 4 12" stroke="#7aa69a" strokeWidth="3" />
      <path d="m20 1 3 8" stroke="#3f7fc0" strokeWidth="3" />
    </Svg>
  ) },
];

function Taskbar() {
  return (
    <footer className="flex h-12 shrink-0 items-center bg-[#15272e] text-white shadow-[inset_0_1px_0_#3a4a50]">
      <div className="flex-1 pl-5" />
      <div className="flex">
        {apps.map((app) => (
          <button
            type="button"
            key={app.name}
            aria-label={app.name}
            className="relative flex h-12 w-11 flex-col items-center justify-center"
          >
            {app.active && <span className="absolute inset-x-[2px] inset-y-1 rounded border border-white/5 bg-white/5" />}
            <span className="relative">{app.icon}</span>
            {app.badge && (
              <span className="absolute top-[7px] right-1 flex size-4 items-center justify-center rounded-full bg-[#13a10e]">
                <Svg size={10} box={10}><path d="m2 5 2 2 4-4" stroke="#fff" strokeWidth="1.500" /></Svg>
              </span>
            )}
            {app.dot && <span className="absolute bottom-[5px] h-[3px] w-[6px] rounded-full bg-[#9aa3a6]" />}
            {app.active && <span className="absolute bottom-[5px] h-[3px] w-4 rounded-full bg-[#a9cdd8]" />}
          </button>
        ))}
      </div>
      <div className="flex flex-1 items-center justify-end pr-5">
        <ChevronUp size={18} strokeWidth={2} />
        <Svg size={17} className="ml-[15px]">
          <path d="M3.500 13a3.500 3.500 0 0 1-.3-7A5 5 0 0 1 12 5.500 4 4 0 0 1 13 13z" fill="#0f6fd0" />
          <path d="M3 13a3 3 0 0 1 1-4l8-1.500a3.200 3.200 0 0 1 1 5.500z" fill="#28a8ea" />
        </Svg>
        <Mic size={16} strokeWidth={1.5} className="ml-4 text-[#a8b6ba]" />
        <Wifi size={17} strokeWidth={2} className="ml-[15px]" />
        <Volume2 size={17} strokeWidth={1.5} className="ml-[7px]" />
        <Svg size={17} className="ml-[7px]">
          <path d="M7 3h7v9M2 6v7h7M14.500 5.500h1v3" stroke="#fff" strokeWidth="1.300" />
          <path d="M5 5h7v3l-3 3H5zM2.500 0 0 4h2l-.5 3L5 3H3z" fill="#fff" />
          <path d="M12.500 15.500c-5-3-2.500-6.500 0-4.500 2.500-2 5 1.500 0 4.500z" fill="#fff" />
        </Svg>
        <div className="ml-5 text-right text-[11px] leading-4">
          <div>13:08</div>
          <div>06/02/2025</div>
        </div>
        <Bell size={16} strokeWidth={1.5} className="ml-[7px] fill-[#c9e4e9] text-[#c9e4e9]" />
      </div>
    </footer>
  );
}

export default function App() {
  return (
    <div className="flex h-screen flex-col overflow-hidden bg-[#f7f7f7] font-['Open_Sans','Noto_Sans',sans-serif]">
      <TabStrip />
      <AddressBar />
      <Bookmarks />
      <div className="mx-1 mb-1 flex min-h-0 flex-1 flex-col overflow-hidden rounded-lg shadow">
        <AppHeader />
        <div className="relative mt-[2px] flex min-h-0 flex-1 overflow-hidden bg-white pb-0.5">
          <Sidebar />
          <UsersPage />
          <div className="absolute inset-0 bg-black/40" />
          <AccessPanel />
        </div>
      </div>
      <Taskbar />
    </div>
  );
}
